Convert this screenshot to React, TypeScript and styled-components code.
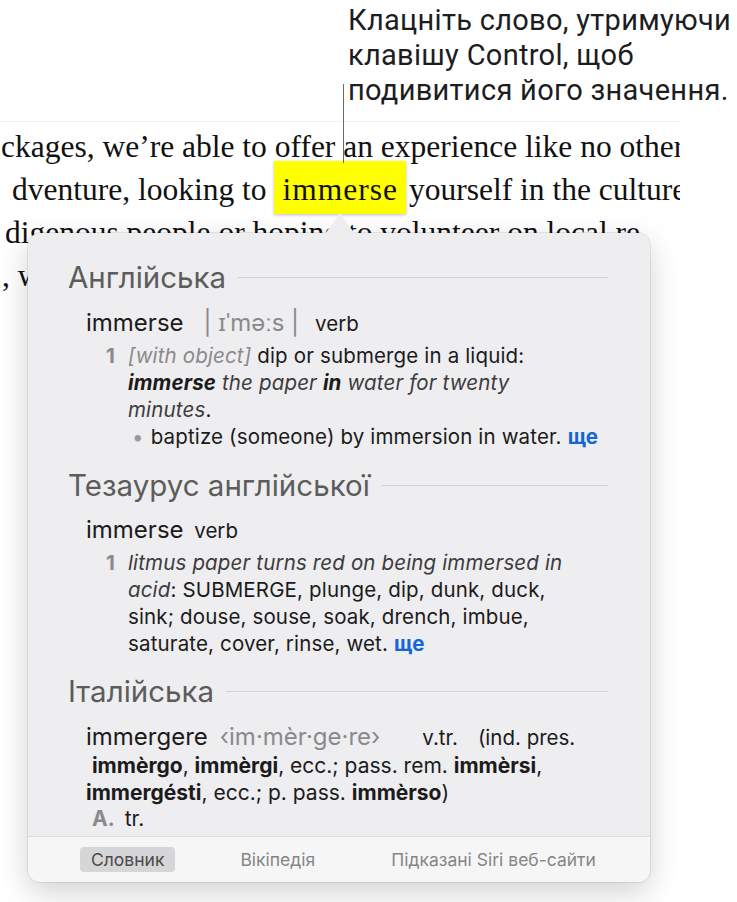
import React from 'react';
import styled, { createGlobalStyle } from 'styled-components';

const GlobalStyle = createGlobalStyle`
  html, body {
    margin: 0;
    padding: 0;
    background: #ffffff;
    overflow: hidden;
  }
`;

const Page = styled.div`
  position: relative;
  width: 737px;
  height: 902px;
  overflow: hidden;
  background: #fff;
`;

const Callout = styled.div`
  padding: 3px 0 0 348px;
  font-family: Roboto, "Noto Sans", sans-serif;
  font-size: 29px;
  letter-spacing: 0.3px;
  line-height: 35px;
  color: #1d1d1f;
  white-space: nowrap;
`;

const Leader = styled.div`
  position: absolute;
  left: 343px;
  top: 84px;
  width: 1px;
  height: 79px;
  background: #6b6b6b;
`;

const Article = styled.div`
  width: 680px;
  overflow: hidden;
  margin-top: 13px;
  border-top: 1px solid #f1f1f1;
  padding-top: 3px;
`;

const TextLine = styled.div<{ $indent: number }>`
  padding-left: ${p => p.$indent}px;
  font-family: "Liberation Serif", "Times New Roman", serif;
  font-size: 31.5px;
  line-height: 43px;
  color: #111;
  white-space: nowrap;
`;

const Highlight = styled.span`
  background: #ffff00;
  padding: 11px 8px 7px;
  margin-right: 3px;
  letter-spacing: 1px;
  box-shadow: 0 1px 3px rgba(0, 0, 0, 0.25);
`;

const Popover = styled.div`
  position: absolute;
  left: 28px;
  top: 233px;
  width: 622px;
  height: 649px;
  display: flex;
  flex-direction: column;
  background: #eeedef;
  border-radius: 12px;
  box-shadow: 0 0 0 1px rgba(0, 0, 0, 0.08), 0 10px 30px rgba(0, 0, 0, 0.18);
  font-family: Inter, "Noto Sans", sans-serif;
  color: #1b1b1b;

  &::before {
    content: '';
    position: absolute;
    left: 297px;
    top: -20px;
    width: 30px;
    height: 21px;
    background: #eeedef;
    clip-path: polygon(50% 0, 100% 100%, 0 100%);
  }
`;

const Content = styled.div`
  flex: 1;
  overflow: hidden;
  padding: 28px 42px 0 40px;
`;

const SectionHead = styled.div<{ $gap: number }>`
  display: flex;
  align-items: center;
  gap: 12px;
  margin-top: ${p => p.$gap}px;
  font-size: 29.5px;
  line-height: 32px;
  color: #5c5c5c;

  &::after {
    content: '';
    flex: 1;
    height: 1px;
    background: #d4d3d5;
  }
`;

const Entry = styled.div<{ $gap: number }>`
  margin: ${p => p.$gap}px 0 0 18px;
  font-size: 24px;
  line-height: 30px;
  white-space: nowrap;
`;

const Pron = styled.span<{ $ml: number; $mr: number }>`
  color: #8a8a8c;
  margin: 0 ${p => p.$mr}px 0 ${p => p.$ml}px;
`;

const Pos = styled.span<{ $ml?: number }>`
  font-size: 20.5px;
  margin-left: ${p => p.$ml ?? 0}px;
`;

const Sense = styled.div`
  display: grid;
  grid-template-columns: 22px 1fr;
  margin: 3px 0 0 38px;
  font-size: 20.5px;
  letter-spacing: 0.15px;
  line-height: 27px;
  white-space: nowrap;
`;

const Num = styled.span`
  color: #8a8a8c;
  font-weight: 700;
`;

const Gray = styled.i`
  color: #8a8a8c;
`;

const Example = styled.i`
  color: #3c3c3e;
`;

const Sub = styled.div`
  display: flex;
  gap: 7px;
  margin-left: 4px;
`;

const Dot = styled.span`
  color: #9a9a9c;
`;

const More = styled.span`
  color: #1466d6;
  font-weight: 700;
  margin-left: 6px;
`;

const Body = styled.div`
  margin-left: 18px;
  font-size: 21px;
  line-height: 26.5px;
  white-space: nowrap;
`;

const Letter = styled.b`
  color: #8a8a8c;
  margin: 0 10px 0 6px;
`;

const Footer = styled.div`
  height: 45px;
  flex: none;
  display: flex;
  align-items: center;
  gap: 54px;
  padding-left: 52px;
  background: #f6f6f6;
  border-top: 1px solid #dddcdd;
  border-radius: 0 0 12px 12px;
`;

const Tab = styled.div<{ $active?: boolean }>`
  height: 25px;
  line-height: 25px;
  padding: 0 11px;
  border-radius: 4px;
  font-size: 17.5px;
  color: ${p => (p.$active ? '#4a4a4a' : '#858587')};
  background: ${p => (p.$active ? '#d6d5d7' : 'transparent')};
`;

const App = () => {
  return (
    <Page>
      <GlobalStyle />
      <Callout>
        Клацніть слово, утримуючи
        <br />
        клавішу Control, щоб
        <br />
        подивитися його значення.
      </Callout>
      <Article>
        <TextLine $indent={1}>ckages, we’re able to offer an experience like no other</TextLine>
        <TextLine $indent={12}>
          dventure, looking to <Highlight>immerse</Highlight>yourself in the culture
        </TextLine>
        <TextLine $indent={5}>digenous people or hoping to volunteer on local re</TextLine>
        <TextLine $indent={2}>, w</TextLine>
      </Article>
      <Leader />
      <Popover>
        <Content>
          <SectionHead $gap={0}>Англійська</SectionHead>
          <Entry $gap={15}>
            immerse
            <Pron $ml={20} $mr={16}>| ɪˈməːs |</Pron>
            <Pos>verb</Pos>
          </Entry>
          <Sense>
            <Num>1</Num>
            <div>
              <Gray>[with object]</Gray> dip or submerge in a liquid:
              <br />
              <b><i>immerse</i></b> <Example>the paper</Example> <b><i>in</i></b>{' '}
              <Example>water for twenty</Example>
              <br />
              <Example>minutes</Example>.
              <Sub>
                <Dot>•</Dot>
                <span>
                  baptize (someone) by immersion in water.<More>ще</More>
                </span>
              </Sub>
            </div>
          </Sense>

          <SectionHead $gap={19}>Тезаурус англійської</SectionHead>
          <Entry $gap={14}>
            immerse <Pos $ml={4}>verb</Pos>
          </Entry>
          <Sense>
            <Num>1</Num>
            <div>
              <Example>litmus paper turns red on being immersed in</Example>
              <br />
              <Example>acid</Example>: SUBMERGE, plunge, dip, dunk, duck,
              <br />
              sink; douse, souse, soak, drench, imbue,
              <br />
              saturate, cover, rinse, wet.<More>ще</More>
            </div>
          </Sense>

          <SectionHead $gap={18}>Італійська</SectionHead>
          <Entry $gap={15}>
            immergere
            <Pron $ml={12} $mr={0}>‹im·mèr·ge·re›</Pron>
            <Pos $ml={42}>v.tr.</Pos>
            <Pos $ml={20}>(ind. pres.</Pos>
          </Entry>
          <Body>
            &nbsp;<b>immèrgo</b>, <b>immèrgi</b>, ecc.; pass. rem. <b>immèrsi</b>,
            <br />
            <b>immergésti</b>, ecc.; p. pass. <b>immèrso</b>)
            <br />
            <Letter>A.</Letter>tr.
          </Body>
        </Content>
        <Footer>
          <Tab $active>Словник</Tab>
          <Tab>Вікіпедія</Tab>
          <Tab>Підказані Siri веб-сайти</Tab>
        </Footer>
      </Popover>
    </Page>
  );
};

export default App;
